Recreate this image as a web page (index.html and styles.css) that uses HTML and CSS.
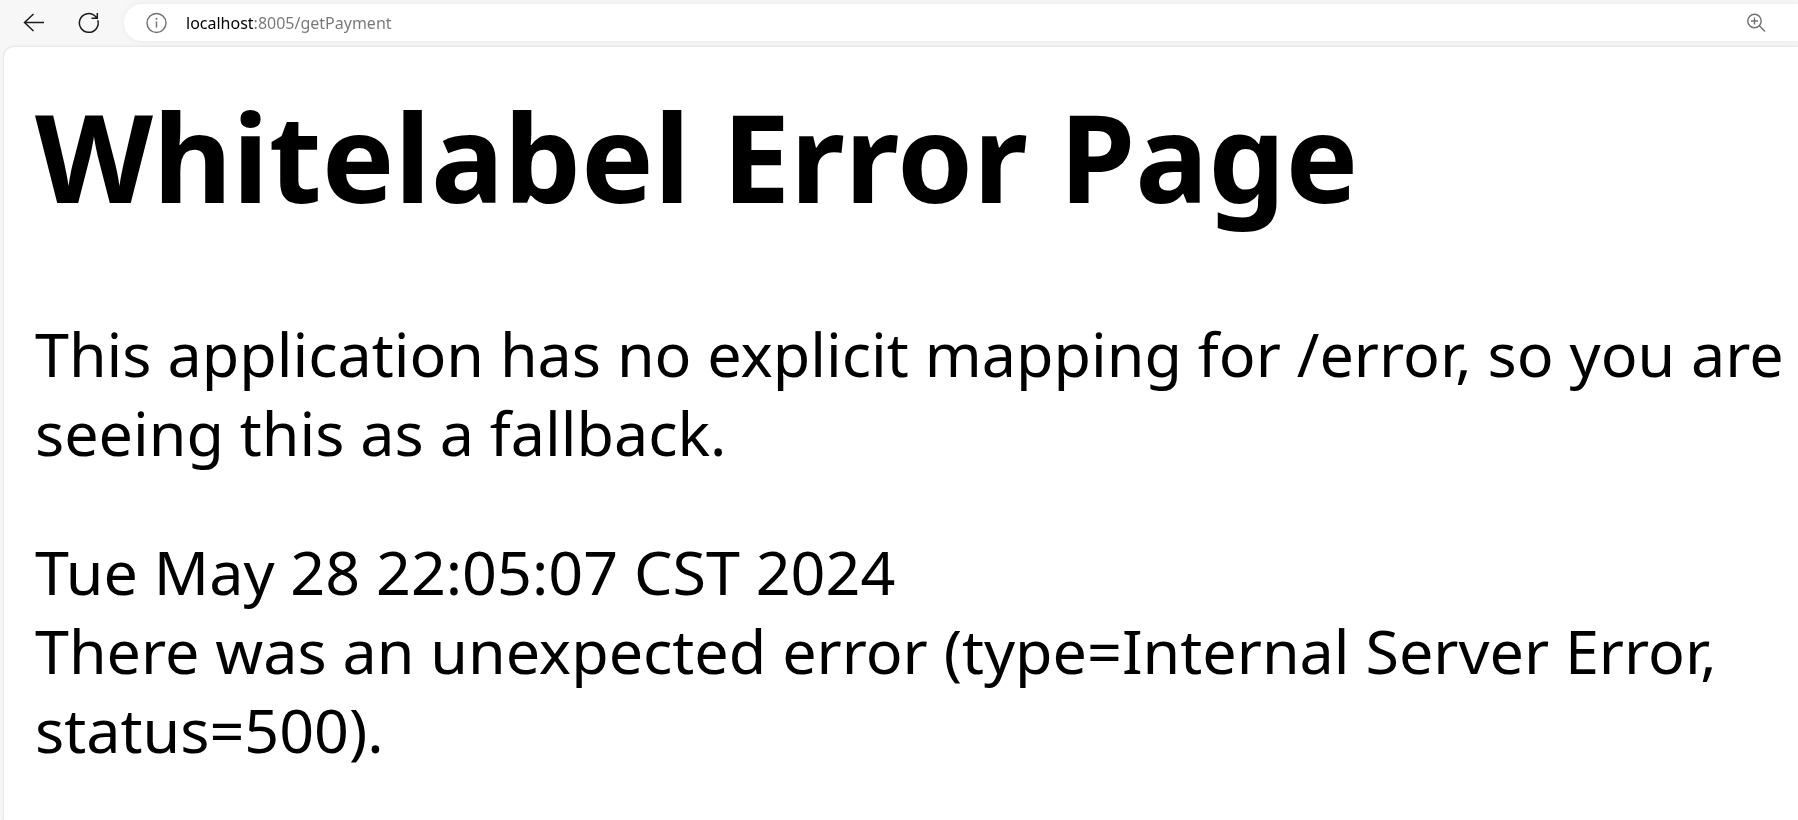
FILE: index.html
```
<!DOCTYPE html>
<html lang="en">
<head>
<meta charset="utf-8">
<title>Whitelabel Error Page</title>
<link rel="stylesheet" href="styles.css">
</head>
<body class="browser">
<header class="toolbar">
  <button class="tool" type="button" aria-label="Back">
    <svg width="24" height="24" viewBox="0 0 24 24"><path d="M22 11.500H2.500M11.500 3L2.500 11.500l9 8.500"/></svg>
  </button>
  <button class="tool" type="button" aria-label="Refresh">
    <svg width="24" height="24" viewBox="0 0 24 24"><path d="M20.800 9.300A9.400 9.400 0 1 1 17.500 4.500L20 7M20.300 2v5.300h-5.800"/></svg>
  </button>
  <form class="address">
    <button class="address-icon" type="button" aria-label="View site information">
      <svg width="22" height="22" viewBox="0 0 22 22"><circle cx="10.500" cy="11" r="9.500"/><path d="M10.500 9.500v6"/><circle class="dot" cx="10.500" cy="6.800" r="1"/></svg>
    </button>
    <input class="url" type="text" aria-label="Address" value="localhost:8005/getPayment">
    <button class="address-icon" type="button" aria-label="Zoom">
      <svg width="22" height="22" viewBox="0 0 22 22"><circle cx="8.500" cy="9" r="6.700"/><path d="M13.300 13.800l5.700 5.700M8.500 5.500v7M5 9h7"/></svg>
    </button>
  </form>
</header>
<main class="page">
  <h1 class="title">Whitelabel Error Page</h1>
  <p class="text">This application has no explicit mapping for /error, so you are seeing this as a fallback.</p>
  <p class="text">Tue May 28 22:05:07 CST 2024<br>There was an unexpected error (type=Internal Server Error, status=500).</p>
</main>
</body>
</html>
```
FILE: styles.css
```
* { box-sizing: border-box; }
.browser {
  margin: 0;
  min-height: 100vh;
  display: flex;
  flex-direction: column;
  background: #f7f7f7;
  color: #000;
  font-family: "Noto Sans", "Open Sans", sans-serif;
}
.toolbar {
  display: flex;
  align-items: center;
  gap: 31px;
  padding: 4px 0 6px 22px;
}
.tool, .address-icon {
  display: flex;
  padding: 0;
  border: 0;
  background: none;
}
svg {
  fill: none;
  stroke: #1b1b1b;
  stroke-width: 1.5;
}
.address-icon svg {
  stroke: #707070;
  stroke-width: 1.4;
}
.address-icon .dot {
  fill: #707070;
  stroke: none;
}
.address {
  flex: 1;
  display: flex;
  align-items: center;
  gap: 18px;
  height: 37px;
  margin-left: -8px;
  padding: 0 30px 0 22px;
  border-radius: 18px 0 0 18px;
  background: #fff;
  box-shadow: 0 0 6px #e8e8e8;
}
.url {
  flex: 1;
  min-width: 0;
  padding: 0;
  border: 0;
  outline: 0;
  font: 16px "Noto Sans", "Open Sans", sans-serif;
  color: #767676;
  /* host name in black, the rest of the address in grey */
  background: linear-gradient(to right, #000 67px, #767676 67px);
  -webkit-background-clip: text;
  background-clip: text;
  -webkit-text-fill-color: transparent;
}
.page {
  flex: 1;
  margin-left: 4px;
  padding: 29px 0 32px 31px;
  border-top-left-radius: 10px;
  background: #fff;
  box-shadow: 0 0 3px #ccc;
}
.title {
  margin: 0 0 78px;
  font-size: 122px;
  line-height: 160px;
  font-weight: 700;
}
.text {
  margin: 0 0 60px;
  font-size: 61px;
  line-height: 79px;
}
.text:last-child {
  margin-bottom: 0;
}
```
